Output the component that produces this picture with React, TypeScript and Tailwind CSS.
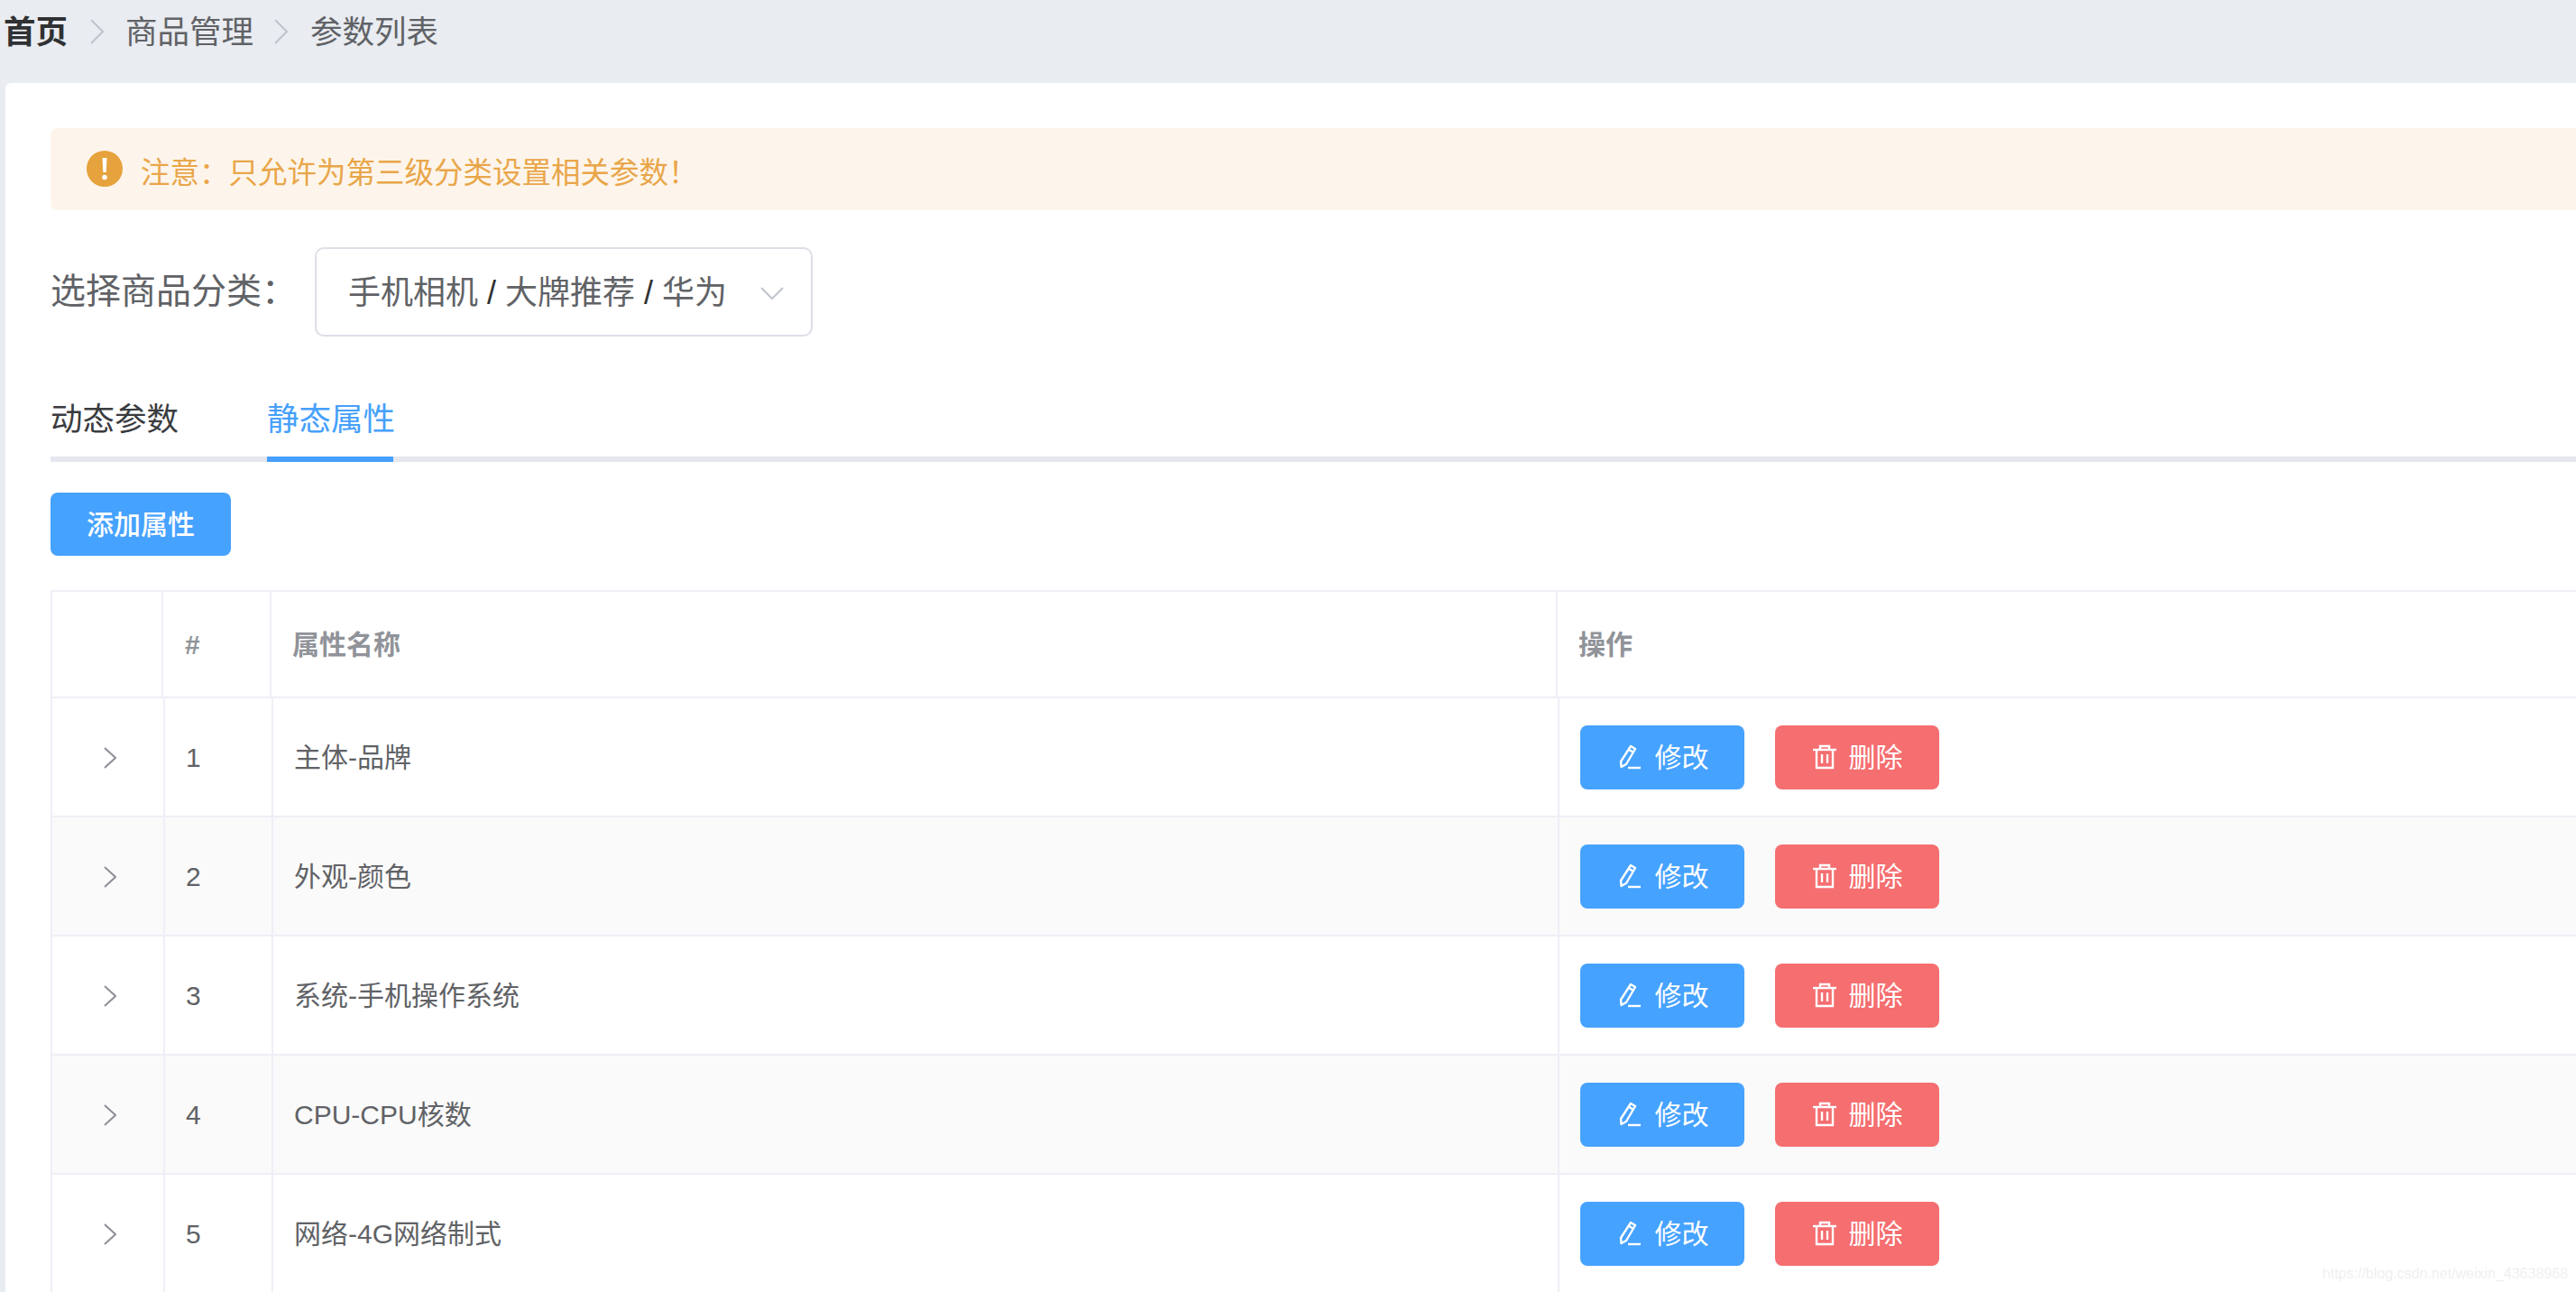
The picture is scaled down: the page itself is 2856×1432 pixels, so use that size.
import React from 'react';

const rows = [
  { id: 1, name: '主体-品牌' },
  { id: 2, name: '外观-颜色' },
  { id: 3, name: '系统-手机操作系统' },
  { id: 4, name: 'CPU-CPU核数' },
  { id: 5, name: '网络-4G网络制式' },
];

const Crumb = () => (
  <svg width="15" height="28" viewBox="0 0 15 28" fill="none" stroke="#c0c4cc" strokeWidth="2">
    <path d="M1 1l13 13L1 27" />
  </svg>
);

const EditIcon = () => (
  <svg width="30" height="30" viewBox="0 0 30 30" fill="none" stroke="currentColor" strokeWidth="2.4" strokeLinejoin="round">
    <path d="M16 3l5 3-10 17-5.500 3-.5-6z" />
    <path d="M13.500 6.500l5.500 3.500" />
    <path d="M13 27h14" />
  </svg>
);

const TrashIcon = () => (
  <svg width="28" height="28" viewBox="0 0 28 28" fill="none" stroke="currentColor" strokeWidth="2.4">
    <path d="M1 6h26" />
    <path d="M9 6V2h10v4" />
    <path d="M5 6v20h18V6" />
    <path d="M11 11v10M17 11v10" />
  </svg>
);

const App = () => {
  return (
    <div className="relative h-[1432px] w-[2856px] overflow-hidden bg-[#e9ecf1] font-['Liberation_Sans','Noto_Sans_CJK_SC',sans-serif]">
      {/* Breadcrumb */}
      <div className="flex h-[92px] items-start pt-[16px] pl-[4px] text-[35.500px] leading-[40px] text-[#606266]">
        <span className="w-[71px] font-bold text-[#303133]">首页</span>
        <span className="mt-[5px] ml-[25px] mr-[24px]"><Crumb /></span>
        <span>商品管理</span>
        <span className="mt-[5px] ml-[23px] mr-[25px]"><Crumb /></span>
        <span>参数列表</span>
      </div>

      {/* Card */}
      <div className="ml-[6px] h-[1340px] rounded-tl-[6px] bg-white pt-[50px] pl-[50px]">
        <div className="flex h-[91px] items-center rounded-l-[7px] bg-[#fdf5eb] pl-[40px]">
          <svg width="40" height="40" viewBox="0 0 40 40" className="mt-[-2px]">
            <circle cx="20" cy="20" r="20" fill="#e6a23c" />
            <path d="M17.500 8h5l-.8 16h-3.400z" fill="#fff" />
            <circle cx="20" cy="29.500" r="2.800" fill="#fff" />
          </svg>
          <span className="mt-[9px] ml-[20px] text-[32.500px] leading-[40px] text-[#e9a649]">{'注意\uFF1A只允许为第三级分类设置相关参数\uFF01'}</span>
        </div>

        <div className="mt-[41px] flex items-center">
          <span className="w-[293px] text-[39px] text-[#606266]">{'选择商品分类\uFF1A'}</span>
          <div className="flex h-[99px] w-[552px] items-center rounded-[10px] border-2 border-[#dcdfe6] pl-[35px] pt-[2px] text-[36px] text-[#606266]">
            <span>手机相机 <span className="text-[#303133]">/</span> 大牌推荐 <span className="text-[#303133]">/</span> 华为</span>
            <svg className="ml-auto mr-[30px]" width="26" height="14" viewBox="0 0 26 14" fill="none" stroke="#c0c4cc" strokeWidth="2">
              <path d="M1 1l12 12L25 1" />
            </svg>
          </div>
        </div>

        {/* Tabs */}
        <div className="mt-[65px] flex h-[74px] items-start gap-[99px] whitespace-nowrap border-b-[6px] border-[#e4e7ed] pt-[2px] text-[35.500px] leading-[50px] text-[#3a3c40]">
          <span className="w-[141px]">动态参数</span>
          <span className="relative h-[66px] w-[140px] text-[#46a0fc]">
            静态属性
            <span className="absolute bottom-[-6px] left-0 h-[6px] w-full bg-[#46a0fc]" />
          </span>
        </div>

        <button className="mt-[34px] block h-[70px] w-[200px] rounded-[8px] bg-[#46a2ff] text-[30px] font-medium text-white">添加属性</button>

        {/* Table */}
        <div className="mt-[38px] border-t-2 border-l-2 border-[#eeeff6] text-[30px]">
          <div className="grid h-[118px] grid-cols-[123px_120px_1426px_1fr] items-stretch border-b-2 border-[#eeeff6] font-bold text-[#909399]">
            <div className="border-r-2 border-[#eeeff6]" />
            <div className="flex items-center border-r-2 border-[#eeeff6] pl-[24px]">#</div>
            <div className="flex items-center border-r-2 border-[#eeeff6] pl-[23px]">属性名称</div>
            <div className="flex items-center pl-[23px]">操作</div>
          </div>
          {rows.map((row) => (
            <div
              key={row.id}
              className={`grid h-[132px] grid-cols-[125px_120px_1426px_1fr] border-b-2 border-[#eeeff6] text-[#606266] ${row.id % 2 === 0 ? 'bg-[#fafafa]' : 'bg-white'}`}
            >
              <div className="flex items-center justify-center border-r-2 border-[#eeeff6] pl-[5px] pt-[2px]">
                <svg width="14" height="24" viewBox="0 0 14 24" fill="none" stroke="#8c8f96" strokeWidth="2">
                  <path d="M1 1l12 11L1 23" />
                </svg>
              </div>
              <div className="flex items-center border-r-2 border-[#eeeff6] pl-[23px]">{row.id}</div>
              <div className="flex items-center border-r-2 border-[#eeeff6] pl-[23px]">{row.name}</div>
              <div className="flex items-center gap-[34px] pl-[23px]">
                <button className="flex h-[71px] w-[182px] items-center justify-center gap-[13px] rounded-[8px] bg-[#46a2ff] text-white">
                  <EditIcon />
                  修改
                </button>
                <button className="flex h-[71px] w-[182px] items-center justify-center gap-[13px] rounded-[8px] bg-[#f56e70] text-white">
                  <TrashIcon />
                  删除
                </button>
              </div>
            </div>
          ))}
        </div>
      </div>

      {/* Watermark */}
      <span className="absolute right-[9px] bottom-[8px] font-['Liberation_Sans',sans-serif] text-[16px] text-[#f0f0f2]">
        https://blog.csdn.net/weixin_43638968
      </span>
    </div>
  );
};

export default App;
